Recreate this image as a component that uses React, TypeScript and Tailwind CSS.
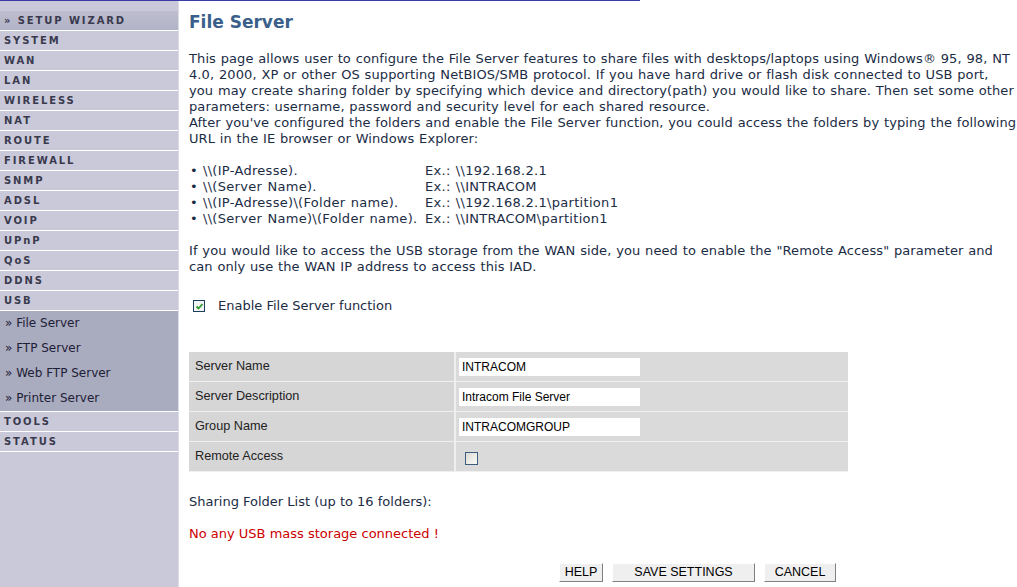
import React from "react";

const menu = ["SYSTEM","WAN","LAN","WIRELESS","NAT","ROUTE","FIREWALL","SNMP","ADSL","VOIP","UPnP","QoS","DDNS","USB"];
const sub = ["File Server","FTP Server","Web FTP Server","Printer Server"];

function Row({ label, children }: { label: string; children: React.ReactNode }) {
  return (
    <div className="flex h-[30px] border-b border-[#f0f0f0]">
      <div className="w-[265px] bg-[#d6d6d6] pl-[6px] pt-[6px] text-[12.7px] text-[#222]" style={{ fontFamily: '"Liberation Sans", Arial, sans-serif' }}>{label}</div>
      <div className="w-[2px] bg-[#efefef]" />
      <div className="flex-1 bg-[#dadada] pl-[3px] pt-[6px]">{children}</div>
    </div>
  );
}

function Input({ value }: { value: string }) {
  return (
    <div className="w-[181px] h-[18px] bg-white pl-[3px] text-[12px] leading-[18px] text-black" style={{ fontFamily: '"Liberation Sans", Arial, sans-serif' }}>{value}</div>
  );
}

function Btn({ label, w }: { label: string; w: string }) {
  return (
    <div className={`${w} h-[19px] bg-[#efefef] border border-t-[#fff] border-l-[#fff] border-b-[#808080] border-r-[#808080] text-[12.5px] leading-[17px] text-center text-black`} style={{ fontFamily: '"Liberation Sans", Arial, sans-serif' }}>{label}</div>
  );
}

export default function App() {
  const verd = { fontFamily: '"DejaVu Sans", Verdana, sans-serif' };
  const wide = { letterSpacing: "0.3px", wordSpacing: "0.8px" };
  const para = { letterSpacing: "0.1px", wordSpacing: "0.5px" };
  return (
    <div className="w-[1017px] h-[587px] bg-white overflow-hidden" style={verd}>
      <div className="h-px w-[640px] bg-[#3b3ba8]" />
      <div className="flex">
        <div className="w-[179px] h-[586px] bg-[#c9c9d9] border-r border-[#dcdce6] text-[#3a3a4e]">
          <div className="h-[10px]" />
          <div className="h-[20px] border-b border-white bg-gradient-to-b from-[#bdbdcf] to-[#b3b3c7] pl-[4px] text-[10px] font-bold tracking-[1.9px] leading-[19px]">» SETUP WIZARD</div>
          {menu.map((m) => (
            <div key={m} className="h-[20px] border-b border-white pl-[4px] text-[10px] font-bold tracking-[1.9px] leading-[19px]">{m}</div>
          ))}
          <div className="bg-[#a9abbf] border-b border-white">
            {sub.map((s) => (
              <div key={s} className="h-[25px] pl-[5px] text-[12px] leading-[25px] text-[#1e2036]">» {s}</div>
            ))}
          </div>
          <div className="h-[20px] border-b border-white pl-[4px] text-[10px] font-bold tracking-[1.9px] leading-[19px]">TOOLS</div>
          <div className="h-[20px] border-b border-white pl-[4px] text-[10px] font-bold tracking-[1.9px] leading-[19px]">STATUS</div>
        </div>
        <div className="flex-1 pl-[10px] text-[13px] leading-[16px] text-[#1b2c45]">
          <div className="mt-[11px] h-[20px] text-[17px] font-bold leading-[20px] text-[#3a5f8a]">File Server</div>
          <div className="mt-[19px]" style={para}>
            This page allows user to configure the File Server features to share files with desktops/laptops using Windows® 95, 98, NT 4.0, 2000, XP or other OS supporting NetBIOS/SMB protocol. If you have hard drive or flash disk connected to USB port, you may create sharing folder by specifying which device and directory(path) you would like to share. Then set some other parameters: username, password and security level for each shared resource.
            <br />
            After you've configured the folders and enable the File Server function, you could access the folders by typing the following URL in the IE browser or Windows Explorer:
          </div>
          <div className="mt-[16px]" style={wide}>
            {[
              ["\\\\(IP-Adresse).", "Ex.: \\\\192.168.2.1"],
              ["\\\\(Server Name).", "Ex.: \\\\INTRACOM"],
              ["\\\\(IP-Adresse)\\(Folder name).", "Ex.: \\\\192.168.2.1\\partition1"],
              ["\\\\(Server Name)\\(Folder name).", "Ex.: \\\\INTRACOM\\partition1"],
            ].map(([a, b]) => (
              <div key={a} className="flex">
                <div className="w-[236px] flex"><span className="w-[14px] pl-[1px]">•</span><span>{a}</span></div>
                <div>{b}</div>
              </div>
            ))}
          </div>
          <div className="mt-[16px]" style={para}>
            If you would like to access the USB storage from the WAN side, you need to enable the "Remote Access" parameter and can only use the WAN IP address to access this IAD.
          </div>
          <div className="mt-[23px] flex items-center h-[16px]">
            <div className="ml-[4px] w-[12px] h-[12px] border border-[#1c3f5e] bg-[#f4f4f4] flex items-center justify-center">
              <svg width="9" height="9" viewBox="0 0 9 9"><path d="M1.5 4.5 L3.5 6.5 L7.5 2" stroke="#2e9a2e" strokeWidth="1.8" fill="none" /></svg>
            </div>
            <span className="ml-[13px]">Enable File Server function</span>
          </div>
          <div className="mt-[38px] w-[659px]">
            <Row label="Server Name"><Input value="INTRACOM" /></Row>
            <Row label="Server Description"><Input value="Intracom File Server" /></Row>
            <Row label="Group Name"><Input value="INTRACOMGROUP" /></Row>
            <Row label="Remote Access">
              <div className="ml-[6px] mt-[4px] w-[13px] h-[13px] border border-[#3d5c80] bg-gradient-to-br from-[#dcdcd4] to-[#fafaf8]" />
            </Row>
          </div>
          <div className="mt-[22px]">Sharing Folder List (up to 16 folders):</div>
          <div className="mt-[16px] text-[#cc0000]">No any USB mass storage connected !</div>
          <div className="mt-[21px] flex gap-[9px] pl-[370px]">
            <Btn label="HELP" w="w-[44px]" />
            <Btn label="SAVE SETTINGS" w="w-[143px]" />
            <Btn label="CANCEL" w="w-[72px]" />
          </div>
        </div>
      </div>
    </div>
  );
}
